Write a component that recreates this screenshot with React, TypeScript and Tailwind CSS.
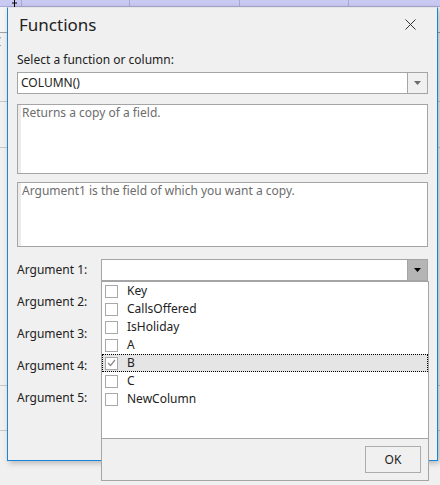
import React from "react";

const font = { fontFamily: "'Noto Sans', 'Open Sans', sans-serif" };

const items = ["Key", "CallsOffered", "IsHoliday", "A", "B", "C", "NewColumn"];

const Arrow = ({ dark }: { dark?: boolean }) => (
  <svg width="7" height="4" viewBox="0 0 7 4">
    <path d="M0 0h7L3.5 4z" fill={dark ? "#000" : "#6b6b6b"} />
  </svg>
);

const Combo = ({ value, pressed }: { value?: string; pressed?: boolean }) => (
  <div className="flex h-[22px] flex-1 border border-[#a5a5a5] bg-white">
    <div className="flex flex-1 items-center pl-[3px] text-[12px] text-[#222]">{value}</div>
    <div
      className={
        pressed
          ? "flex w-[20px] items-center justify-center border-l border-[#a5a5a5] bg-[#b5b5b5]"
          : "flex w-[20px] items-center justify-center border-l border-[#a5a5a5] bg-[#f0f0f0]"
      }
    >
      <Arrow dark={pressed} />
    </div>
  </div>
);

const DescBox = ({ text, h }: { text: string; h: string }) => (
  <div className={`flex border border-[#a5a5a5] bg-white ${h}`}>
    <div className="w-[3px] bg-[#ececec]" />
    <div className="px-[1px] text-[12px] leading-[16px] text-[#6d6d6d]">{text}</div>
  </div>
);

const Check = ({ on }: { on?: boolean }) => (
  <div className="flex h-[13px] w-[13px] items-center justify-center border border-[#a8a8a8] bg-white">
    {on && (
      <svg width="9" height="8" viewBox="0 0 9 8">
        <path d="M1 4l2.5 2.5L8 1" stroke="#8a8a8a" strokeWidth="1.2" fill="none" />
      </svg>
    )}
  </div>
);

export default function App() {
  return (
    <div className="relative h-[485px] w-[440px] overflow-hidden bg-[#f0f0f0]" style={font}>
      {/* spreadsheet behind the dialog */}
      <div className="flex h-[7px] border-b border-[#a9a9d6] bg-[#c9c9f1]">
        <div className="w-[22px] border-r border-[#a9a9d6]" />
        <div className="w-[108px] border-r border-[#a9a9d6]" />
        <div className="w-[110px] border-r border-[#a9a9d6]" />
        <div className="w-[109px] border-r border-[#a9a9d6]" />
      </div>
      <div className="flex flex-col">
        <div className="h-[26px] border-b border-[#a0a0a0] bg-[#f4f4f4]" />
        <div className="h-[69px] border-b border-[#c8c8c8] pl-[0px] text-[12px] text-[#999]">
          <span className="-ml-[6px]">C</span>
        </div>
        <div className="h-[46px] border-b border-[#c8c8c8]" />
        <div className="h-[238px] border-b border-[#c8c8c8]" />
        <div className="h-[45px] border-b border-[#c8c8c8]" />
      </div>
      <svg className="absolute left-[11px] top-0" width="7" height="9" viewBox="0 0 7 9">
        <path d="M3.5 0v8M1 3h5M0 8.5h7" stroke="#000" strokeWidth="1" />
      </svg>

      {/* dialog window */}
      <div className="absolute left-[7px] top-[7px] flex h-[454px] w-[431px] flex-col border border-[#1883d7] border-t-[#e6e6e6] bg-[#f0f0f0] shadow-[2px_2px_6px_rgba(0,0,0,0.25)]">
        <div className="flex h-[29px] items-end justify-between pl-[11px] pr-[21px]">
          <span className="text-[17px] leading-[24px] text-[#222]">Functions</span>
          <svg className="mb-[7px]" width="11" height="11" viewBox="0 0 11 11">
            <path d="M0.5 0.5l10 10M10.5 0.5l-10 10" stroke="#333" strokeWidth="1" />
          </svg>
        </div>
        <div className="flex flex-col px-[9px]">
          <div className="mt-[15px] text-[12px] leading-[16px] text-[#222]">Select a function or column:</div>
          <div className="mt-[4px] flex">
            <Combo value="COLUMN()" />
          </div>
          <div className="mt-[10px]">
            <DescBox text="Returns a copy of a field." h="h-[70px]" />
          </div>
          <div className="mt-[8px]">
            <DescBox text="Argument1 is the field of which you want a copy." h="h-[65px]" />
          </div>
          <div className="mt-[12px] flex flex-col gap-[10px]">
            {[1, 2, 3, 4, 5].map((n) => (
              <div key={n} className="flex h-[22px] items-center">
                <span className="w-[84px] text-[12px] text-[#222]">Argument {n}:</span>
                <Combo pressed={n === 1} />
              </div>
            ))}
          </div>
        </div>
      </div>

      {/* open dropdown list */}
      <div className="absolute left-[101px] top-[281px] flex h-[200px] w-[328px] flex-col border border-[#a5a5a5] bg-white">
        <div className="flex h-[156px] flex-col">
          {items.map((it) => (
            <div
              key={it}
              className={
                it === "B"
                  ? "flex h-[18px] items-center gap-[9px] border border-dotted border-black bg-[#e5e5e5] pl-[2px]"
                  : "flex h-[18px] items-center gap-[9px] pl-[3px]"
              }
            >
              <Check on={it === "B"} />
              <span className="text-[12px] text-[#222]">{it}</span>
            </div>
          ))}
        </div>
        <div className="flex flex-1 items-start justify-end border-t border-[#a5a5a5] bg-[#f0f0f0] pr-[7px] pt-[7px]">
          <div className="flex h-[27px] w-[56px] items-center justify-center border border-[#adadad] bg-[#f0f0f0] text-[12px] text-[#222]">
            OK
          </div>
        </div>
      </div>
    </div>
  );
}
